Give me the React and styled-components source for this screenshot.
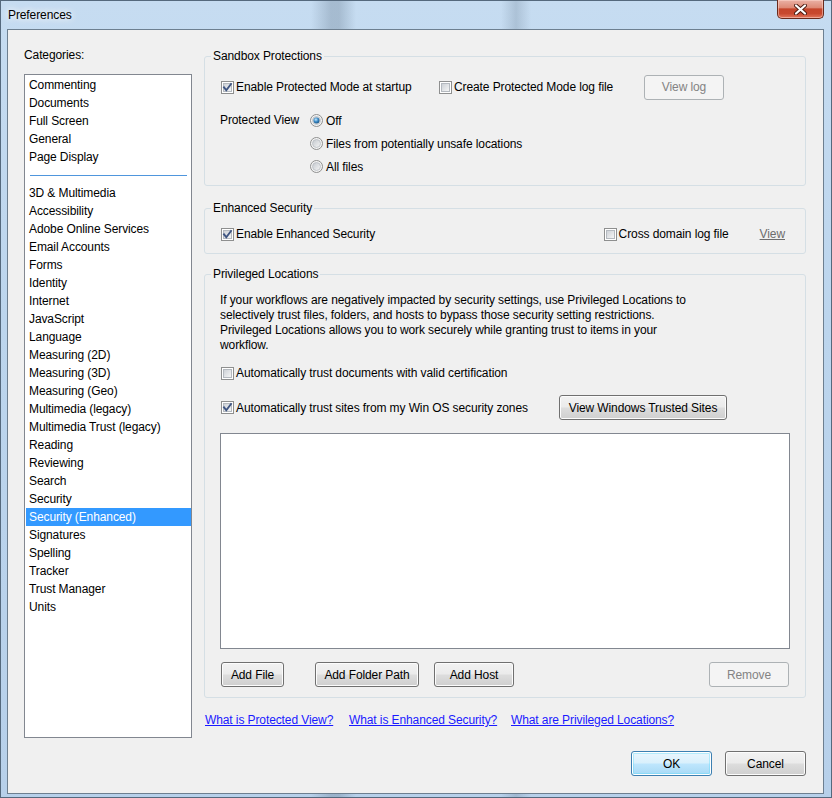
import React, { useId } from "react";
import styled, { createGlobalStyle } from "styled-components";

const GlobalStyle = createGlobalStyle`
  html, body {
    margin: 0;
    padding: 0;
  }
  body {
    width: 832px;
    height: 798px;
    overflow: hidden;
    font-family: "Liberation Sans", Arial, sans-serif;
    font-size: 12px;
    letter-spacing: -0.1px;
    color: #000;
  }
`;

const Frame = styled.div`
  width: 832px;
  height: 798px;
  box-sizing: border-box;
  display: flex;
  flex-direction: column;
  border: 1px solid #55697d;
  background:
    linear-gradient(90deg, transparent 310px, rgba(70, 90, 110, 0.25) 330px, rgba(70, 90, 110, 0.25) 338px, transparent 355px),
    linear-gradient(90deg, transparent 500px, rgba(70, 90, 110, 0.2) 515px, transparent 530px),
    linear-gradient(180deg, #c6dcf1 0%, #bcd5ed 40%, #b7d0ea 100%);
`;

const TitleBar = styled.div`
  height: 28px;
  display: flex;
  justify-content: space-between;
  align-items: flex-start;
  flex-shrink: 0;
`;

const Title = styled.div`
  padding: 6px 0 0 7px;
  line-height: 16px;
  color: #000;
  text-shadow: 0 0 6px #fff, 0 0 10px #fff;
`;

const CloseBtn = styled.div`
  width: 47px;
  height: 19px;
  margin: -1px 7px 0 0;
  box-sizing: border-box;
  border: 1px solid #6a2a1c;
  border-top: none;
  border-radius: 0 0 5px 5px;
  display: flex;
  align-items: center;
  justify-content: center;
  background: linear-gradient(180deg, #eab1a5 0%, #de8a76 42%, #c5452b 50%, #c8482e 75%, #e2765c 100%);
  box-shadow: inset 0 0 0 1px rgba(255, 220, 210, 0.5);
`;

const Client = styled.div`
  flex: 1;
  margin: 0 7px 3px 6px;
  border: 1px solid #6d7f90;
  background: #f0f0f0;
  padding: 17px 17px 0 16px;
  display: flex;
  flex-direction: column;
`;

const Main = styled.div`
  display: flex;
  gap: 12px;
  height: 691px;
`;

const LeftCol = styled.div`
  width: 168px;
  display: flex;
  flex-direction: column;
`;

const Label = styled.div`
  line-height: 16px;
`;

const CatList = styled.div`
  margin-top: 11px;
  flex: 1;
  border: 1px solid #828790;
  background: #fff;
  padding: 1px 0;
`;

const CatItem = styled.div`
  height: 18px;
  line-height: 18px;
  margin: 0 0 0 1px;
  padding-left: 3px;
  white-space: nowrap;
  background: ${(p) => (p.$selected ? "#3399ff" : "transparent")};
  color: ${(p) => (p.$selected ? "#fff" : "#000")};
`;

const CatSeparator = styled.div`
  height: 18px;
  display: flex;
  align-items: center;
  padding: 0 4px 0 5px;
  &::after {
    content: "";
    flex: 1;
    height: 1px;
    background: #4f96dd;
  }
`;

const RightCol = styled.div`
  width: 602px;
  display: flex;
  flex-direction: column;
`;

const Group = styled.fieldset`
  margin: ${(p) => p.$mt || 0}px 0 0 0;
  min-width: 0;
  border: 1px solid #d5dfe5;
  border-radius: 3px;
  padding: 0 ${(p) => p.$pr || 16}px ${(p) => p.$pb || 10}px 16px;
`;

const Legend = styled.legend`
  padding: 0 2px;
  margin-left: -10px;
  line-height: 16px;
`;

const Row = styled.div`
  display: flex;
  align-items: center;
  margin-top: ${(p) => p.$mt || 0}px;
  height: ${(p) => p.$h || 18}px;
`;

const CheckItem = styled.label`
  display: flex;
  align-items: center;
  gap: 2px;
  white-space: nowrap;
  width: ${(p) => (p.$w ? `${p.$w}px` : "auto")};
  flex: ${(p) => (p.$grow ? 1 : "none")};
`;

const Glyph = styled.svg`
  width: 13px;
  height: 13px;
  flex-shrink: 0;
`;

const ViewGrid = styled.div`
  display: grid;
  grid-template-columns: 90px 1fr;
  margin-top: 10px;
  margin-left: -1px;
`;

const ViewLabel = styled.div`
  line-height: 22px;
`;

const RadioStack = styled.div`
  display: flex;
  flex-direction: column;
`;

const RadioItem = styled.label`
  height: 23px;
  display: flex;
  align-items: center;
  gap: 3px;
  white-space: nowrap;
`;

const Button = styled.div`
  box-sizing: border-box;
  height: 25px;
  width: ${(p) => p.$w}px;
  flex-shrink: 0;
  display: flex;
  align-items: center;
  justify-content: center;
  border-radius: 3px;
  white-space: nowrap;
  margin-left: ${(p) => (p.$auto ? "auto" : `${p.$ml || 0}px`)};
  margin-right: ${(p) => p.$mr || 0}px;
  border: 1px solid ${(p) => (p.$disabled ? "#adb2b5" : p.$default ? "#3c7fb1" : "#707070")};
  color: ${(p) => (p.$disabled ? "#838383" : "#000")};
  background: ${(p) =>
    p.$disabled
      ? "#f4f4f4"
      : p.$default
      ? "linear-gradient(180deg, #eaf6fd 0%, #d9f0fc 48%, #bee6fd 52%, #a7d9f5 100%)"
      : "linear-gradient(180deg, #f2f2f2 0%, #ebebeb 48%, #dddddd 52%, #cfcfcf 100%)"};
  box-shadow: ${(p) =>
    p.$disabled
      ? "none"
      : p.$default
      ? "inset 0 0 0 1px #fff, inset 0 0 0 2px #48d8fb55"
      : "inset 0 0 0 1px #fcfcfc"};
`;

const Para = styled.p`
  margin: 11px 0 0 -1px;
  line-height: 15px;
`;

const EntryBox = styled.div`
  margin: 13px 0 0 -1px;
  width: 570px;
  height: 216px;
  box-sizing: border-box;
  border: 1px solid #828790;
  background: #fff;
`;

const Link = styled.a`
  color: ${(p) => (p.$disabled ? "#6d6d6d" : "#1a1aff")};
  text-decoration: underline;
  white-space: nowrap;
  cursor: pointer;
`;

const LinkRow = styled.div`
  margin-top: 14px;
  line-height: 16px;
  display: grid;
  grid-template-columns: 144px 162px auto;
  justify-content: start;
  padding-left: 1px;
`;

const Footer = styled.div`
  margin-top: 13px;
  display: flex;
  justify-content: flex-end;
  gap: 13px;
`;

function CheckBox({ checked }) {
  const id = useId();
  return (
    <Glyph viewBox="0 0 13 13">
      <defs>
        <linearGradient id={id} x1="0" y1="0" x2="1" y2="1">
          <stop offset="0" stopColor="#cbcfd5" />
          <stop offset="1" stopColor="#f7f7f7" />
        </linearGradient>
      </defs>
      <rect x="0.5" y="0.5" width="12" height="12" fill="#fff" stroke="#8e8f8f" />
      <rect x="2.5" y="2.5" width="8" height="8" fill={`url(#${id})`} stroke="#b4b9bf" />
      {checked && (
        <path d="M3 6.3 L5.3 9.2 L10 3" stroke="#3f5582" strokeWidth="1.9" fill="none" strokeLinecap="square" />
      )}
    </Glyph>
  );
}

function Radio({ checked }) {
  const id = useId();
  return (
    <Glyph viewBox="0 0 13 13">
      <defs>
        <linearGradient id={`${id}a`} x1="0" y1="0" x2="1" y2="1">
          <stop offset="0" stopColor="#c3c8ce" />
          <stop offset="1" stopColor="#f6f6f6" />
        </linearGradient>
        <radialGradient id={`${id}b`} cx="0.4" cy="0.35" r="0.7">
          <stop offset="0" stopColor="#c7ebff" />
          <stop offset="0.5" stopColor="#3d8cc8" />
          <stop offset="1" stopColor="#164f7e" />
        </radialGradient>
      </defs>
      <circle cx="6.5" cy="6.5" r="6" fill="#f4f4f4" stroke="#8e8f8f" />
      <circle cx="6.5" cy="6.5" r="4" fill={`url(#${id}a)`} stroke="#b8bdc2" strokeWidth="0.8" />
      {checked && <circle cx="6.5" cy="6.5" r="3" fill={`url(#${id}b)`} />}
    </Glyph>
  );
}

const categoriesTop = ["Commenting", "Documents", "Full Screen", "General", "Page Display"];
const categoriesRest = [
  "3D & Multimedia",
  "Accessibility",
  "Adobe Online Services",
  "Email Accounts",
  "Forms",
  "Identity",
  "Internet",
  "JavaScript",
  "Language",
  "Measuring (2D)",
  "Measuring (3D)",
  "Measuring (Geo)",
  "Multimedia (legacy)",
  "Multimedia Trust (legacy)",
  "Reading",
  "Reviewing",
  "Search",
  "Security",
  "Security (Enhanced)",
  "Signatures",
  "Spelling",
  "Tracker",
  "Trust Manager",
  "Units",
];

export default function App() {
  const selected = "Security (Enhanced)";
  return (
    <>
      <GlobalStyle />
      <Frame>
        <TitleBar>
          <Title>Preferences</Title>
          <CloseBtn>
            <svg width="13" height="11" viewBox="0 0 13 11">
              <path d="M2 1.5 L11 9.5 M11 1.5 L2 9.5" stroke="#4a1a10" strokeWidth="4" strokeLinecap="round" />
              <path d="M2 1.5 L11 9.5 M11 1.5 L2 9.5" stroke="#fff" strokeWidth="2.2" strokeLinecap="round" />
            </svg>
          </CloseBtn>
        </TitleBar>
        <Client>
          <Main>
            <LeftCol>
              <Label>Categories:</Label>
              <CatList>
                {categoriesTop.map((c) => (
                  <CatItem key={c}>{c}</CatItem>
                ))}
                <CatSeparator />
                {categoriesRest.map((c) => (
                  <CatItem key={c} $selected={c === selected}>
                    {c}
                  </CatItem>
                ))}
              </CatList>
            </LeftCol>
            <RightCol>
              <Group $mt={1} $pb={7}>
                <Legend>Sandbox Protections</Legend>
                <Row $mt={11} $h={24}>
                  <CheckItem $w={218}>
                    <CheckBox checked />
                    Enable Protected Mode at startup
                  </CheckItem>
                  <CheckItem $w={205}>
                    <CheckBox />
                    Create Protected Mode log file
                  </CheckItem>
                  <Button $w={80} $disabled>
                    View log
                  </Button>
                </Row>
                <ViewGrid>
                  <ViewLabel>Protected View</ViewLabel>
                  <RadioStack>
                    <RadioItem>
                      <Radio checked />
                      Off
                    </RadioItem>
                    <RadioItem>
                      <Radio />
                      Files from potentially unsafe locations
                    </RadioItem>
                    <RadioItem>
                      <Radio />
                      All files
                    </RadioItem>
                  </RadioStack>
                </ViewGrid>
              </Group>

              <Group $mt={14} $pr={20} $pb={10}>
                <Legend>Enhanced Security</Legend>
                <Row $mt={9}>
                  <CheckItem $grow>
                    <CheckBox checked />
                    Enable Enhanced Security
                  </CheckItem>
                  <CheckItem $w={156}>
                    <CheckBox />
                    Cross domain log file
                  </CheckItem>
                  <Link $disabled>View</Link>
                </Row>
              </Group>

              <Group $mt={12} $pr={15} $pb={10}>
                <Legend>Privileged Locations</Legend>
                <Para>
                  If your workflows are negatively impacted by security settings, use Privileged Locations to
                  <br />
                  selectively trust files, folders, and hosts to bypass those security setting restrictions.
                  <br />
                  Privileged Locations allows you to work securely while granting trust to items in your
                  <br />
                  workflow.
                </Para>
                <Row $mt={11}>
                  <CheckItem>
                    <CheckBox />
                    Automatically trust documents with valid certification
                  </CheckItem>
                </Row>
                <Row $mt={13} $h={25}>
                  <CheckItem $w={338}>
                    <CheckBox checked />
                    Automatically trust sites from my Win OS security zones
                  </CheckItem>
                  <Button $w={168}>View Windows Trusted Sites</Button>
                </Row>
                <EntryBox />
                <Row $mt={13} $h={25}>
                  <Button $w={63}>Add File</Button>
                  <Button $w={104} $ml={31}>
                    Add Folder Path
                  </Button>
                  <Button $w={80} $ml={15}>
                    Add Host
                  </Button>
                  <Button $w={80} $auto $mr={1} $disabled>
                    Remove
                  </Button>
                </Row>
              </Group>

              <LinkRow>
                <Link>What is Protected View?</Link>
                <Link>What is Enhanced Security?</Link>
                <Link>What are Privileged Locations?</Link>
              </LinkRow>
            </RightCol>
          </Main>
          <Footer>
            <Button $w={81} $default>
              OK
            </Button>
            <Button $w={81}>Cancel</Button>
          </Footer>
        </Client>
      </Frame>
    </>
  );
}
